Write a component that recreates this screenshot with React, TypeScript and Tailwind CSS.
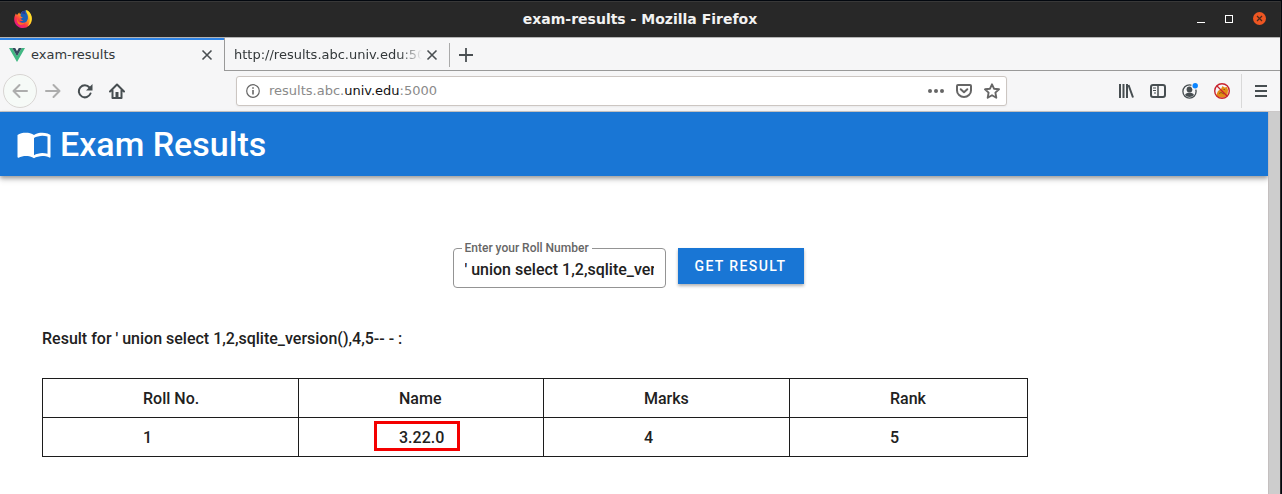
import { useState } from "react";
import type { ReactNode } from "react";

const headers = ["Roll No.", "Name", "Marks", "Rank"];
const row = ["1", "3.22.0", "4", "5"];

function FirefoxLogo() {
  return (
    <svg width="18" height="18" viewBox="0 0 18 18" aria-hidden="true">
      <defs>
        <linearGradient id="fox" x1="0.85" y1="0.1" x2="0.2" y2="0.9">
          <stop offset="0" stopColor="#ffe226" />
          <stop offset="0.4" stopColor="#ff9a1f" />
          <stop offset="0.7" stopColor="#ff3647" />
          <stop offset="1" stopColor="#e31587" />
        </linearGradient>
      </defs>
      <path d="M1.8 3.6 3 5 5.2 2.4 6 4.2 8 2l4.6-1.8c3.4 1.4 5.4 5 5.2 9A8.8 8.8 0 0 1 9 18C4 18 .2 14 .2 9.400c0-2 .6-4 1.600-5.800Z" fill="url(#fox)" />
      <path d="M7 3C8.200 1 10.500.3 12.200.6c-.4 1.700.6 2.400 1.200 4 .8 2.400.8 5-.8 6.800-2 2-5.400 1.800-7-.4 1.600.4 2.800 0 4-.9-1.500.1-2.700-.4-3.200-1.500.7-.6 1.500-.4 2.500-1.200-1.400-.3-2.200-1-2.400-2 .2-.8.300-1.600.5-2.400Z" fill="#1b5fb5" />
      <path d="M7.200 3C8.200 1.500 9.800.9 11 1c-.3 1.500.2 2.400.8 3.600-1.600-.8-3-.8-4.600-1.600Z" fill="#2e3a8c" />
      <path d="M12.200.3c3.600 1.300 5.500 4.800 5.500 8.700-.1 3-1.700 5.800-4 7.200 2-3 2.600-6 1.700-9-.7-2.500-2.700-4-3.200-6.900Z" fill="#ffdc2b" />
      <path d="M3.600 8c-.2 2.500 1 4.600 3.400 5.200 1.400.3 2.600 0 3.600-.6-1 1.900-3 2.700-5 2C3.400 13.800 2.600 10.500 3.600 8Z" fill="#ff7a1c" />
    </svg>
  );
}

function CloseIcon() {
  return (
    <svg width="12" height="12" viewBox="0 0 12 12" stroke="#4a4f52" strokeWidth="1.6" aria-hidden="true">
      <path d="M1.500 1.500l9 9M10.500 1.500l-9 9" />
    </svg>
  );
}

function Tool({ label, children, className = "" }: { label: string; children: ReactNode; className?: string }) {
  return (
    <button type="button" aria-label={label} className={`flex h-8 w-8 items-center justify-center ${className}`}>
      {children}
    </button>
  );
}

function TitleBar() {
  return (
    <header className="flex h-9 items-center justify-between border-t border-[#383838] bg-[#282828] px-[14px] pb-0.5">
      <div className="flex-1">
        <FirefoxLogo />
      </div>
      <h1 className="font-['DejaVu_Sans',sans-serif] text-sm font-bold text-[#f2f2f2]">
        exam-results - Mozilla Firefox
      </h1>
      <div className="flex flex-1 items-center justify-end gap-5">
        <button type="button" aria-label="Minimize">
          <svg width="8" height="8" aria-hidden="true"><path d="M0 7.500h8" stroke="#fff" /></svg>
        </button>
        <button type="button" aria-label="Maximize">
          <svg width="8" height="8" aria-hidden="true"><rect x=".5" y=".5" width="7" height="7" stroke="#fff" fill="none" /></svg>
        </button>
        <button type="button" aria-label="Close window">
          <svg width="13" height="13" aria-hidden="true">
            <circle cx="6.500" cy="6.500" r="6.500" fill="#ee5622" />
            <path d="M4 4l5 5M9 4l-5 5" stroke="#4a2a1c" strokeWidth="1.200" />
          </svg>
        </button>
      </div>
    </header>
  );
}

function TabBar() {
  return (
    <div role="tablist" className="flex h-[34px] border-t border-[#b4b4b4] bg-[#f6f6f7] text-[13px] text-[#33383a]">
      <div className="flex w-56 items-center border-t-2 border-[#2f84e6] pr-[11px] pb-0.5 pl-[9px]">
        <svg width="16" height="14" viewBox="0 0 16 14" aria-hidden="true">
          <path d="M0 0h3.300L8 8.200 12.700 0H16L8 14Z" fill="#41b883" />
          <path d="M3.300 0h2.900L8 3.200 9.800 0h2.900L8 8.200Z" fill="#35495e" />
        </svg>
        <button type="button" role="tab" aria-selected="true" className="ml-1.5 flex-1 text-left">
          exam-results
        </button>
        <button type="button" aria-label="Close exam-results"><CloseIcon /></button>
      </div>
      <div className="flex flex-1 items-center border-b border-l border-[#999] pt-0.5">
        <button type="button" role="tab" aria-selected="false" className="ml-[9px] w-[188px] overflow-hidden mask-r-from-88% mask-r-to-100% text-left whitespace-nowrap">
          http://results.abc.univ.edu:5000
        </button>
        <button type="button" aria-label="Close results tab" className="ml-1"><CloseIcon /></button>
        <span className="ml-[11px] h-6 w-px bg-[#aaa]" />
        <button type="button" aria-label="New tab" className="ml-[9px]">
          <svg width="14" height="14" stroke="#4a4f52" strokeWidth="1.800" aria-hidden="true"><path d="M7 0v14M0 7h14" /></svg>
        </button>
      </div>
    </div>
  );
}

function NavBar() {
  return (
    <nav className="flex h-[41px] items-center border-b border-[#cbc8c8] bg-[#f6f6f7] pr-[3px] pl-[3px]">
      <button type="button" aria-label="Back" className="flex h-[34px] w-[34px] items-center justify-center rounded-full border border-[#d8d5d3] bg-[#f6faf7]">
        <svg width="16" height="16" fill="none" stroke="#adadad" strokeWidth="2" strokeLinecap="round" strokeLinejoin="round" aria-hidden="true"><path d="M15 8H1.500M7.500 2l-6 6 6 6" /></svg>
      </button>
      <Tool label="Forward">
        <svg width="16" height="16" fill="none" stroke="#adadad" strokeWidth="2" strokeLinecap="round" strokeLinejoin="round" aria-hidden="true"><path d="M1 8h13.500M8.500 2l6 6-6 6" /></svg>
      </Tool>
      <Tool label="Reload">
        <svg width="16" height="16" fill="none" stroke="#474e51" strokeWidth="2" aria-hidden="true">
          <path d="M13.500 10.500A6 6 0 1 1 12.500 4.500" strokeLinecap="round" />
          <path d="M15.500 1v6.500H9Z" fill="#474e51" stroke="none" />
        </svg>
      </Tool>
      <Tool label="Home">
        <svg width="16" height="16" fill="none" stroke="#474e51" strokeWidth="2" strokeLinecap="round" strokeLinejoin="round" aria-hidden="true">
          <path d="M1 8.500 8 1.500l7 7M3.500 7.500V15h9V7.500" />
          <path d="M6.500 9h3v5.500h-3z" fill="#474e51" stroke="none" />
          <path d="M8 10v4" strokeWidth="1.500" />
        </svg>
      </Tool>
      <div className="ml-[103px] flex h-[30px] flex-1 items-center rounded-[3px] border border-[#ccc6c2] bg-white pl-[9px] shadow-xs">
        <svg width="14" height="14" aria-hidden="true">
          <circle cx="7" cy="7" r="6.300" fill="none" stroke="#666" strokeWidth="1.200" />
          <path d="M7 6v4.500M7 3.300v1.500" stroke="#666" strokeWidth="1.600" />
        </svg>
        <div
          role="textbox"
          aria-label="Address"
          contentEditable
          suppressContentEditableWarning
          spellCheck={false}
          className="ml-[9px] flex-1 text-[13px] whitespace-nowrap text-[#8a8a8a]"
        >
          results.abc.<span className="text-[#111]">univ.edu</span>:5000
        </div>
        <button type="button" aria-label="Page actions" className="flex w-7 justify-center">
          <svg width="16" height="4" fill="#666" aria-hidden="true"><circle cx="2" cy="2" r="2" /><circle cx="8" cy="2" r="2" /><circle cx="14" cy="2" r="2" /></svg>
        </button>
        <button type="button" aria-label="Save to Pocket" className="flex w-7 justify-center">
          <svg width="16" height="14" fill="none" stroke="#666" strokeWidth="2" strokeLinecap="round" strokeLinejoin="round" aria-hidden="true">
            <path d="M1 2q0-1 1-1h12q1 0 1 1v4.500a7 6.500 0 0 1-14 0Z" />
            <path d="M4.700 5.200 8 8.200l3.300-3" />
          </svg>
        </button>
        <button type="button" aria-label="Bookmark" className="flex w-7 justify-center">
          <svg width="16" height="16" fill="none" stroke="#666" strokeWidth="1.900" strokeLinejoin="round" aria-hidden="true">
            <path d="m8 1.300 2 4.400 5 .6-3.600 3.300.9 5.100L8 12.200l-4.300 2.500.9-5.100L1 6.300l5-.6Z" />
          </svg>
        </button>
      </div>
      <div className="ml-[103px] flex">
        <Tool label="Library">
          <svg width="16" height="14" fill="none" stroke="#474e51" strokeWidth="2" aria-hidden="true"><path d="M2 0v14M5.500 0v14M9 0v14M10.500 1l4.500 12.500" /></svg>
        </Tool>
        <Tool label="Sidebars">
          <svg width="16" height="14" fill="none" stroke="#474e51" strokeWidth="2" aria-hidden="true">
            <rect x="1" y="1" width="14" height="12" rx="2" />
            <path d="M8 1v12" strokeWidth="1.500" />
            <path d="M3 4h3M3 6.500h3M4 9h2" strokeWidth="1" />
          </svg>
        </Tool>
        <Tool label="Account">
          <svg width="16" height="16" aria-hidden="true">
            <circle cx="7.500" cy="8.500" r="6.600" fill="none" stroke="#474e51" strokeWidth="1.300" />
            <circle cx="7.500" cy="6.500" r="2.900" fill="#474e51" />
            <path d="M3 12c1-2 2.300-2.300 4.500-2.300S11 10 12 12c-2 2.500-7 2.500-9 0Z" fill="#474e51" />
            <circle cx="13" cy="3" r="3.700" fill="#f6f6f7" /><circle cx="13.200" cy="2.800" r="2.700" fill="#0a84ff" />
          </svg>
        </Tool>
        <Tool label="Proxy disabled">
          <svg width="16" height="16" aria-hidden="true">
            <path d="M2 12.500 4 8l3-2 1.500-3 2 1.500 2.500-.5 1 3-.5 5-3 2.500H5Z" fill="#e38b16" />
            <path d="M5 10.500l2-1 3 1.500M9.500 6.500h1.500" stroke="#8b5a16" fill="none" />
            <circle cx="8" cy="8" r="7.300" fill="none" stroke="#c9222d" strokeWidth="1.400" />
            <path d="M3 3l10 10" stroke="#c9222d" strokeWidth="1.300" />
          </svg>
        </Tool>
      </div>
      <span className="ml-[3px] h-[34px] w-px bg-[#d9d9d9]" />
      <Tool label="Menu" className="ml-[3px]">
        <svg width="12" height="12" stroke="#474e51" strokeWidth="2" aria-hidden="true"><path d="M0 1h12M0 6h12M0 11h12" /></svg>
      </Tool>
    </nav>
  );
}

function ExamPage() {
  const [roll, setRoll] = useState("' union select 1,2,sqlite_version(),4,5-- -");
  return (
    <div className="flex-1 bg-white font-[Roboto,sans-serif] text-base font-medium text-[#212121]">
      <div className="flex h-16 items-center bg-[#1976d5] px-4 text-white shadow-[0_2px_4px_rgba(0,0,0,0.3),0_4px_6px_rgba(0,0,0,0.14)]">
        <svg width="36" height="36" viewBox="0 0 24 24" fill="currentColor" aria-hidden="true">
          <path d="M21 5c-1.110-.35-2.330-.5-3.500-.5-1.950 0-4.050.4-5.500 1.500-1.450-1.100-3.550-1.500-5.500-1.500S2.450 4.900 1 6v14.650c0 .25.25.5.5.5.1 0 .15-.05.25-.05C3.100 20.450 5.050 20 6.500 20c1.950 0 4.050.4 5.500 1.500 1.350-.85 3.800-1.500 5.500-1.500 1.650 0 3.350.3 4.750 1.050.1.05.15.05.25.05.25 0 .5-.25.5-.5V6c-.6-.45-1.250-.75-2-1zm0 13.500c-1.100-.35-2.300-.5-3.500-.5-1.700 0-4.150.65-5.500 1.500V8c1.350-.85 3.800-1.500 5.500-1.500 1.200 0 2.400.15 3.500.5v11.500z" />
        </svg>
        <h2 className="ml-2 text-[34px] leading-10">Exam Results</h2>
      </div>
      <main className="px-[42px] pt-[66px]">
        <form className="flex items-start justify-center gap-3 pr-3" onSubmit={(e) => e.preventDefault()}>
          <fieldset className="h-[46px] w-[213px] rounded-[4px] border border-[#949494] px-2">
            <legend className="px-[3px] text-xs leading-3 text-[#666]">
              <label htmlFor="roll">Enter your Roll Number</label>
            </legend>
            <input
              id="roll"
              value={roll}
              onChange={(e) => setRoll(e.target.value)}
              className="block h-[30px] w-full px-[3px] outline-none"
            />
          </fieldset>
          <button type="submit" className="mt-1.5 h-9 w-[126px] bg-[#1976d5] text-sm tracking-widest text-white shadow-[0_2px_3px_rgba(0,0,0,0.3)]">
            GET RESULT
          </button>
        </form>
        <p className="mt-[39px] leading-6">Result for {roll} :</p>
        <table className="mt-[27px] w-[985px] table-fixed border-collapse text-left leading-6">
          <colgroup>
            <col className="w-[256px]" />
            <col className="w-[245px]" />
            <col className="w-[246px]" />
            <col className="w-[238px]" />
          </colgroup>
          <thead>
            <tr>
              {headers.map((h) => (
                <th key={h} scope="col" className="border border-[#1c1c1c] pt-2 pb-1.5 pl-[100px] font-medium whitespace-nowrap">{h}</th>
              ))}
            </tr>
          </thead>
          <tbody>
            <tr>
              {row.map((v) => (
                <td key={v} className="relative border border-[#1c1c1c] pt-2 pb-1.5 pl-[100px]">
                  {v}
                  {v === "3.22.0" && <span className="absolute top-[3px] left-[75px] h-[30px] w-[86px] border-3 border-[#f40000]" />}
                </td>
              ))}
            </tr>
          </tbody>
        </table>
      </main>
    </div>
  );
}

export default function App() {
  return (
    <div className="flex min-h-screen flex-col border-t border-r border-[#03080f] bg-white font-['DejaVu_Sans',sans-serif]">
      <div className="flex flex-1 flex-col border-r border-[#2b2b2b]">
        <TitleBar />
        <TabBar />
        <NavBar />
        <div className="flex flex-1">
          <ExamPage />
          <div className="w-3 border-l border-[#c4bfbf] bg-[#cdcdcd]" />
        </div>
      </div>
    </div>
  );
}
